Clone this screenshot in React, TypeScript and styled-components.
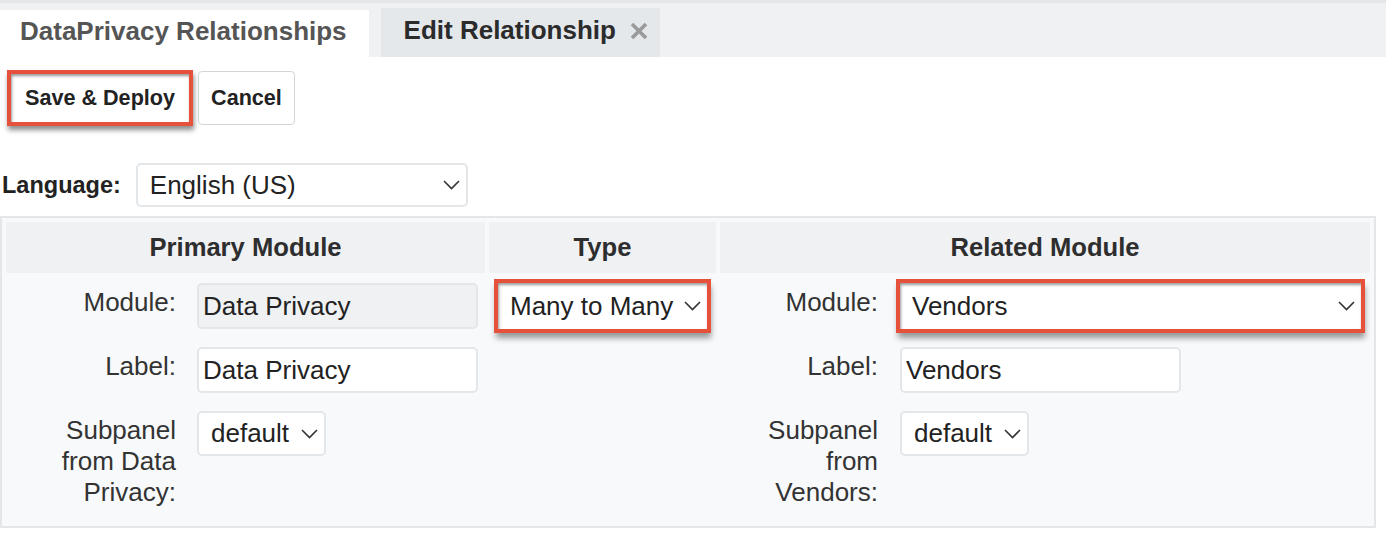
import React from 'react'
import styled, { createGlobalStyle } from 'styled-components'

const GlobalStyle = createGlobalStyle`
  body {
    margin: 0;
    background: #fff;
    font-family: "Liberation Sans", Arial, sans-serif;
    color: #333;
  }
`

const Page = styled.div`
  width: 1386px;
  height: 540px;
  overflow: hidden;
`

const TabBar = styled.div`
  display: flex;
  align-items: flex-end;
  gap: 12px;
  height: 54px;
  border-top: 3px solid #e3e7ea;
  background: #f0f1f3;
`

const Tab = styled.div<{ $active?: boolean }>`
  display: flex;
  align-items: center;
  gap: 14px;
  box-sizing: border-box;
  height: ${p => (p.$active ? 47 : 49)}px;
  padding: ${p => (p.$active ? '0 22px 4px 20px' : '0 12px 4px 23px')};
  background: ${p => (p.$active ? '#fff' : '#e4e8eb')};
  color: ${p => (p.$active ? '#555' : '#2b2b2b')};
  font-size: 26px;
  font-weight: bold;
`

const Toolbar = styled.div`
  display: flex;
  align-items: center;
  gap: 5px;
  padding: 13px 0 0 7px;
`

const Button = styled.button<{ $marked?: boolean }>`
  box-sizing: border-box;
  height: ${p => (p.$marked ? 56 : 54)}px;
  padding: 0 ${p => (p.$marked ? 14 : 12)}px;
  background: #fff;
  border: ${p => (p.$marked ? '4px solid #e5513b' : '1px solid #d3d6d9')};
  border-radius: ${p => (p.$marked ? 0 : 4)}px;
  box-shadow: ${p =>
    p.$marked ? '1px 4px 5px rgba(0,0,0,0.45), inset 1px 2px 3px rgba(0,0,0,0.4)' : 'none'};
  font-family: inherit;
  font-size: 21.6px;
  font-weight: bold;
  color: #222;
`

const LanguageRow = styled.div`
  display: flex;
  align-items: center;
  gap: 15px;
  margin-top: 37px;
  padding-left: 2px;
`

const LanguageLabel = styled.span`
  font-size: 23.5px;
  font-weight: bold;
  color: #222;
`

const Table = styled.div`
  box-sizing: border-box;
  width: 1376px;
  margin-top: 9px;
  padding: 4px;
  border: 2px solid #e3e7ea;
  background: #f8f9fa;
  display: grid;
  grid-template-columns: 479px 227px 650px;
  gap: 4px;
`

const HeadCell = styled.div`
  display: flex;
  align-items: center;
  justify-content: center;
  height: 51px;
  background: #eff1f3;
  font-size: 25.6px;
  font-weight: bold;
  color: #2e2e2e;
`

const BodyCell = styled.div<{ $indent?: number }>`
  padding: 6px 0 14px ${p => p.$indent ?? 0}px;
`

const FormGrid = styled.div<{ $labelWidth: number; $gap: number }>`
  display: grid;
  grid-template-columns: ${p => p.$labelWidth}px 1fr;
  column-gap: ${p => p.$gap}px;
  row-gap: 18px;
  align-items: start;
  justify-items: start;
`

const FieldLabel = styled.label`
  justify-self: end;
  max-width: 130px;
  padding-top: 4px;
  text-align: right;
  font-size: 26px;
  line-height: 31px;
  color: #333;
`

const TextInput = styled.input`
  box-sizing: border-box;
  width: 281px;
  height: 46px;
  padding: 0 4px;
  border: 2px solid #e3e7ea;
  border-radius: 5px;
  background: #fff;
  font-family: inherit;
  font-size: 26px;
  color: #222;
  outline: none;

  &[readonly] {
    background: #eff1f3;
  }
`

const SelectBox = styled.div<{ $width: number; $height?: number; $marked?: boolean }>`
  box-sizing: border-box;
  display: flex;
  align-items: center;
  justify-content: space-between;
  width: ${p => p.$width}px;
  height: ${p => p.$height ?? 46}px;
  padding: 0 6px 0 12px;
  background: #fff;
  border: ${p => (p.$marked ? 'none' : '2px solid #e3e7ea')};
  border-radius: ${p => (p.$marked ? 0 : 5)}px;
  box-shadow: ${p =>
    p.$marked
      ? '0 0 0 4px #e5513b, 1px 6px 6px 3px rgba(0,0,0,0.4), inset 1px 2px 3px rgba(0,0,0,0.4)'
      : 'none'};
  font-size: 26px;
  color: #222;
`

const Chevron = () => (
  <svg width="17" height="10" viewBox="0 0 17 10">
    <polyline points="1,1 8.5,8.5 16,1" fill="none" stroke="#333" strokeWidth="1.6" />
  </svg>
)

const CloseIcon = () => (
  <svg width="18" height="18" viewBox="0 0 18 18">
    <path d="M2 2 L16 16 M16 2 L2 16" stroke="#9a9a9a" strokeWidth="3.6" />
  </svg>
)

interface DropdownProps {
  value: string
  width: number
  height?: number
  marked?: boolean
}

function Dropdown({ value, width, height, marked }: DropdownProps) {
  return (
    <SelectBox $width={width} $height={height} $marked={marked}>
      <span>{value}</span>
      <Chevron />
    </SelectBox>
  )
}

function App() {
  return (
    <Page>
      <GlobalStyle />
      <TabBar>
        <Tab $active>DataPrivacy Relationships</Tab>
        <Tab>
          Edit Relationship
          <CloseIcon />
        </Tab>
      </TabBar>

      <Toolbar>
        <Button $marked>Save &amp; Deploy</Button>
        <Button>Cancel</Button>
      </Toolbar>

      <LanguageRow>
        <LanguageLabel>Language:</LanguageLabel>
        <Dropdown value="English (US)" width={332} height={44} />
      </LanguageRow>

      <Table>
        <HeadCell>Primary Module</HeadCell>
        <HeadCell>Type</HeadCell>
        <HeadCell>Related Module</HeadCell>

        <BodyCell>
          <FormGrid $labelWidth={170} $gap={21}>
            <FieldLabel>Module:</FieldLabel>
            <TextInput readOnly value="Data Privacy" />
            <FieldLabel>Label:</FieldLabel>
            <TextInput defaultValue="Data Privacy" />
            <FieldLabel>Subpanel from Data Privacy:</FieldLabel>
            <Dropdown value="default" width={129} height={45} />
          </FormGrid>
        </BodyCell>

        <BodyCell $indent={9}>
          <Dropdown value="Many to Many" width={209} marked />
        </BodyCell>

        <BodyCell>
          <FormGrid $labelWidth={158} $gap={22}>
            <FieldLabel>Module:</FieldLabel>
            <Dropdown value="Vendors" width={461} marked />
            <FieldLabel>Label:</FieldLabel>
            <TextInput defaultValue="Vendors" />
            <FieldLabel>Subpanel from Vendors:</FieldLabel>
            <Dropdown value="default" width={129} height={45} />
          </FormGrid>
        </BodyCell>
      </Table>
    </Page>
  )
}

export default App
